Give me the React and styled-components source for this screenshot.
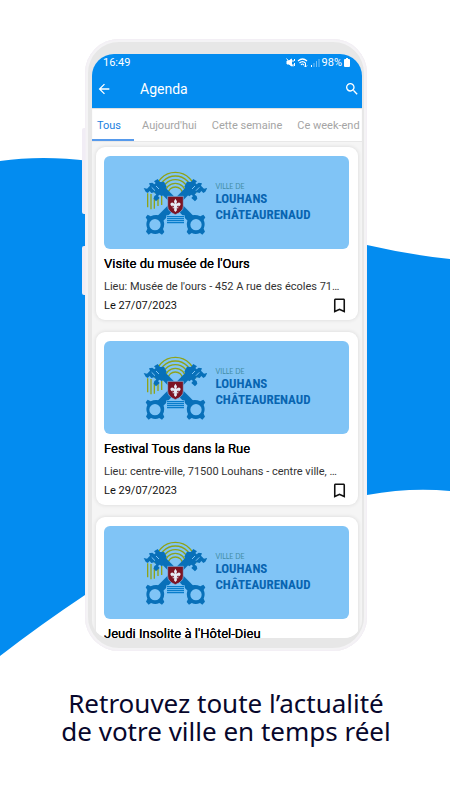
import React, { useState } from "react";
import styled, { createGlobalStyle } from "styled-components";
import { MdArrowBack, MdBookmarkBorder, MdSearch } from "react-icons/md";

const GlobalStyle = createGlobalStyle`
  * {
    box-sizing: border-box;
  }

  body {
    margin: 0;
    background: #fff;
    font-family: Roboto, "Liberation Sans", sans-serif;
  }

  button {
    border: 0;
    padding: 0;
    background: none;
    font: inherit;
    color: inherit;
    cursor: pointer;
  }
`;

const Page = styled.main`
  position: relative;
  display: flex;
  flex-direction: column;
  align-items: center;
  min-height: 100vh;
  padding: 39px 16px 16px 18px;
  overflow: hidden;
`;

const Backdrop = styled.svg`
  position: absolute;
  inset: 0;
  width: 100%;
  height: 100%;
`;

const Phone = styled.div`
  position: relative;
  width: 100%;
  max-width: 282px;
  padding: 15px 5px 13px 7px;
  border-radius: 34px;
  background: #e7e7e7;
  box-shadow: inset 0 0 0 1px #f3eff5, inset 0 0 0 3px #f4f3f5;
`;

const SideButton = styled.span`
  position: absolute;
  left: -3px;
  top: ${props => props.$top};
  width: 3px;
  height: ${props => props.$height};
  border-radius: 2px 0 0 2px;
  background: #f1edf5;
`;

const Screen = styled.div`
  display: flex;
  flex-direction: column;
  aspect-ratio: 270 / 584;
  border-radius: 22px 22px 18px 18px;
  overflow: hidden;
  background: #f5f5f5;
`;

const Header = styled.header`
  flex: none;
  height: 54px;
  background: #038cf0;
  color: #fff;
`;

const StatusBar = styled.div`
  display: flex;
  align-items: center;
  justify-content: space-between;
  height: 16px;
  padding: 0 12px 0 11px;
  font-size: 11px;
`;

const StatusIcons = styled.div`
  display: flex;
  align-items: center;
  gap: 2px;
`;

const AppBar = styled.div`
  display: flex;
  align-items: center;
  height: 38px;
  padding: 0 2px 0 4px;
`;

const Title = styled.h1`
  flex: 1;
  margin: 0 0 0 28px;
  font-size: 14px;
  font-weight: 400;
`;

const IconButton = styled.button`
  display: flex;
  font-size: 16px;
`;

const Tabs = styled.nav`
  display: flex;
  flex: none;
  height: 34px;
  border-bottom: 1px solid #e8e8e8;
  background: #fff;
  box-shadow: inset 0 1px 1px #ddd;
  overflow: hidden;
`;

const Tab = styled.button`
  flex: none;
  padding: 4px 7px 0 8px;
  border-bottom: 2px solid ${props => (props.$active ? "#569aec" : "transparent")};
  color: ${props => (props.$active ? "#1a7fe0" : "#a5a5a5")};
  font-size: 11px;
  white-space: nowrap;

  &:first-child {
    padding-right: 13px;
    padding-left: 5px;
  }

  &:last-child {
    padding-right: 0;
  }
`;

const Feed = styled.div`
  display: flex;
  flex: 1;
  flex-direction: column;
  gap: 12px;
  min-height: 0;
  padding: 5px 4px 0;
  overflow: hidden;
`;

const Card = styled.article`
  flex: none;
  height: 173px;
  padding: 9px 9px 0 8px;
  border-radius: 9px;
  background: #fff;
  box-shadow: 0 0 4px rgba(0, 0, 0, 0.12);
`;

const Banner = styled.div`
  display: flex;
  align-items: center;
  justify-content: center;
  gap: 8px;
  height: 93px;
  padding-left: 1px;
  border-radius: 6px;
  background: #80c4f6;
`;

const CityName = styled.div`
  padding-bottom: 2px;
  color: #0865b1;
  font-family: "Roboto Condensed", "Liberation Sans Narrow", "Liberation Sans", sans-serif;
  font-size: 13px;
  font-weight: 700;
  line-height: 16px;
  text-transform: uppercase;
  white-space: nowrap;
`;

const CityPrefix = styled.div`
  color: #438da5;
  font-family: Lato, sans-serif;
  font-size: 7px;
  font-weight: 400;
  line-height: 10px;
`;

const EventName = styled.h2`
  margin: 7px 0 0;
  font-size: 13px;
  font-weight: 400;
  line-height: 16px;
  color: #000;
  text-shadow: 0 0 0 #000;
`;

const Place = styled.p`
  margin: 8px 0 0;
  overflow: hidden;
  color: #333;
  font-size: 11px;
  line-height: 14px;
  text-overflow: ellipsis;
  white-space: nowrap;
`;

const CardFooter = styled.div`
  display: flex;
  align-items: center;
  justify-content: space-between;
  height: 22px;
  color: #111;
  font-size: 11px;
`;

const Caption = styled.p`
  position: relative;
  margin: 38px 0 0;
  color: #07072c;
  font-family: "Noto Sans", sans-serif;
  font-size: 26px;
  line-height: 28px;
  text-align: center;
`;

const EmblemSvg = styled.svg`
  flex: none;
  width: 64px;
  height: 66px;
`;

const Key = ({ transform }) => (
  <g transform={transform} fill="#0870b9">
    <path d="M84 106 L99 91 L190 182 L174 198 Z" />
    <path d="M38 96 L48 98 L57 89 L54 82 L64 80 L70 85 L74 81 L69 76 L80 69 L87 78 L99 77 L107 92 L98 104 L101 114 L92 121 L86 116 L81 120 L86 126 L75 136 L68 128 L70 120 L76 116 L70 109 L61 111 L56 105 L50 111 L44 107 Z" />
    <path d="M62 94 L72 104 M75 90 L84 99" stroke="#80c4f6" strokeWidth="3" />
    <path
      fillRule="evenodd"
      d="M165 178 L176 180 Q193 173 208 181 L217 176 L223 184 L218 192 Q224 205 218 218 L222 227 L214 236 L207 231 Q194 237 182 231 L174 236 L167 228 L171 219 Q164 205 170 193 L162 186 Z M195 189 A17 17 0 1 0 195 223 A17 17 0 1 0 195 189 Z"
    />
  </g>
);

const Emblem = () => (
  <EmblemSvg viewBox="36 42 192 198" aria-hidden="true">
    <g fill="none" stroke="#8fa31b" strokeWidth="4">
      <path d="M72 112 A61 63 0 0 1 194 112" />
      <path d="M82 112 A51 52 0 0 1 184 112" />
      <path d="M92 112 A41 41 0 0 1 174 112" />
      <path d="M102 112 A31 30 0 0 1 164 112" />
      <path d="M112 112 A21 19 0 0 1 154 112" />
    </g>
    <path
      d="M50 112V154 M60 114V160 M70 125V158 M81 126V150 M92 119V147"
      stroke="#8fa31b"
      strokeWidth="4"
    />
    <Key />
    <Key transform="translate(267 0) scale(-1 1)" />
    <path d="M106 178H161V204H106Z" fill="#80c4f6" />
    <path d="M108 182H159 M108 188H159 M108 194H159 M108 200H159" stroke="#087ccb" strokeWidth="4" />
    <path d="M110 121H157V150Q157 167 133 176Q110 167 110 150Z" fill="#7c1424" stroke="#80c4f6" strokeWidth="2" />
    <path
      d="M133 128L138 136L136 144Q143 136 148 142Q151 148 143 152Q143 148 140 149L137 154H142V157H137L138 163L133 168L129 163L130 157H125V154H130L127 149Q124 148 124 152Q116 148 119 142Q124 136 131 144L129 136Z"
      fill="#e6ecf5"
    />
  </EmblemSvg>
);

const StatusGlyphs = () => (
  <svg width="34" height="11" viewBox="0 0 34 11" fill="none" stroke="#fff" aria-hidden="true">
    <path d="M1 4H3L5.500 2V9L3 7H1Z" fill="#fff" />
    <path d="M0.500 1.500L7 9.500M7 3V5M7 7V9M8.500 2V4M8.500 6V9" />
    <path d="M12 4Q16.500 0 21 4M13.500 6Q16.500 3 19.500 6M15 8Q16.500 6 18 8" strokeWidth="1.200" />
    <path d="M19.500 6V10M18 8.500L19.500 10L21 8.500" />
    <path d="M25.500 8V10" />
    <path d="M28 6V10M30.500 4V10M33 2V10" opacity=".45" />
  </svg>
);

const Battery = () => (
  <svg width="6" height="9" viewBox="0 0 6 9" fill="#fff" aria-hidden="true">
    <path d="M2 0H4V1H5Q6 1 6 2V8Q6 9 5 9H1Q0 9 0 8V2Q0 1 1 1H2Z" />
  </svg>
);

const tabs = ["Tous", "Aujourd'hui", "Cette semaine", "Ce week-end"];

const events = [
  {
    name: "Visite du musée de l'Ours",
    place: "Lieu: Musée de l'ours - 452 A rue des écoles 71…",
    date: "Le 27/07/2023"
  },
  {
    name: "Festival Tous dans la Rue",
    place: "Lieu: centre-ville, 71500 Louhans - centre ville, …",
    date: "Le 29/07/2023"
  },
  {
    name: "Jeudi Insolite à l'Hôtel-Dieu"
  }
];

const EventCard = ({ event }) => (
  <Card>
    <Banner>
      <Emblem />
      <CityName>
        <CityPrefix>Ville de</CityPrefix>
        Louhans
        <br />
        Châteaurenaud
      </CityName>
    </Banner>
    <EventName>{event.name}</EventName>
    {event.place && <Place>{event.place}</Place>}
    {event.date && (
      <CardFooter>
        <span>{event.date}</span>
        <IconButton aria-label="Enregistrer">
          <MdBookmarkBorder size={19} />
        </IconButton>
      </CardFooter>
    )}
  </Card>
);

export default function App() {
  const [active, setActive] = useState("Tous");

  return (
    <Page>
      <GlobalStyle />
      <Backdrop viewBox="0 0 450 800" preserveAspectRatio="none" aria-hidden="true">
        <path
          d="M0 161 Q42 155 90 161 C190 172 290 228 367 245 Q410 255 450 259 V491 Q410 487 367 495 C270 510 170 535 85 595 Q40 625 0 656 Z"
          fill="#038cf0"
        />
      </Backdrop>
      <Phone>
        <SideButton $top="89px" $height="86px" />
        <SideButton $top="207px" $height="49px" />
        <Screen>
          <Header>
            <StatusBar>
              <span>16:49</span>
              <StatusIcons>
                <StatusGlyphs />
                <span>98%</span>
                <Battery />
              </StatusIcons>
            </StatusBar>
            <AppBar>
              <IconButton aria-label="Retour">
                <MdArrowBack />
              </IconButton>
              <Title>Agenda</Title>
              <IconButton aria-label="Rechercher">
                <MdSearch />
              </IconButton>
            </AppBar>
          </Header>
          <Tabs>
            {tabs.map(tab => (
              <Tab key={tab} $active={tab === active} onClick={() => setActive(tab)}>
                {tab}
              </Tab>
            ))}
          </Tabs>
          <Feed>
            {events.map(event => (
              <EventCard key={event.name} event={event} />
            ))}
          </Feed>
        </Screen>
      </Phone>
      <Caption>
        Retrouvez toute l’actualité
        <br />
        de votre ville en temps réel
      </Caption>
    </Page>
  );
}
